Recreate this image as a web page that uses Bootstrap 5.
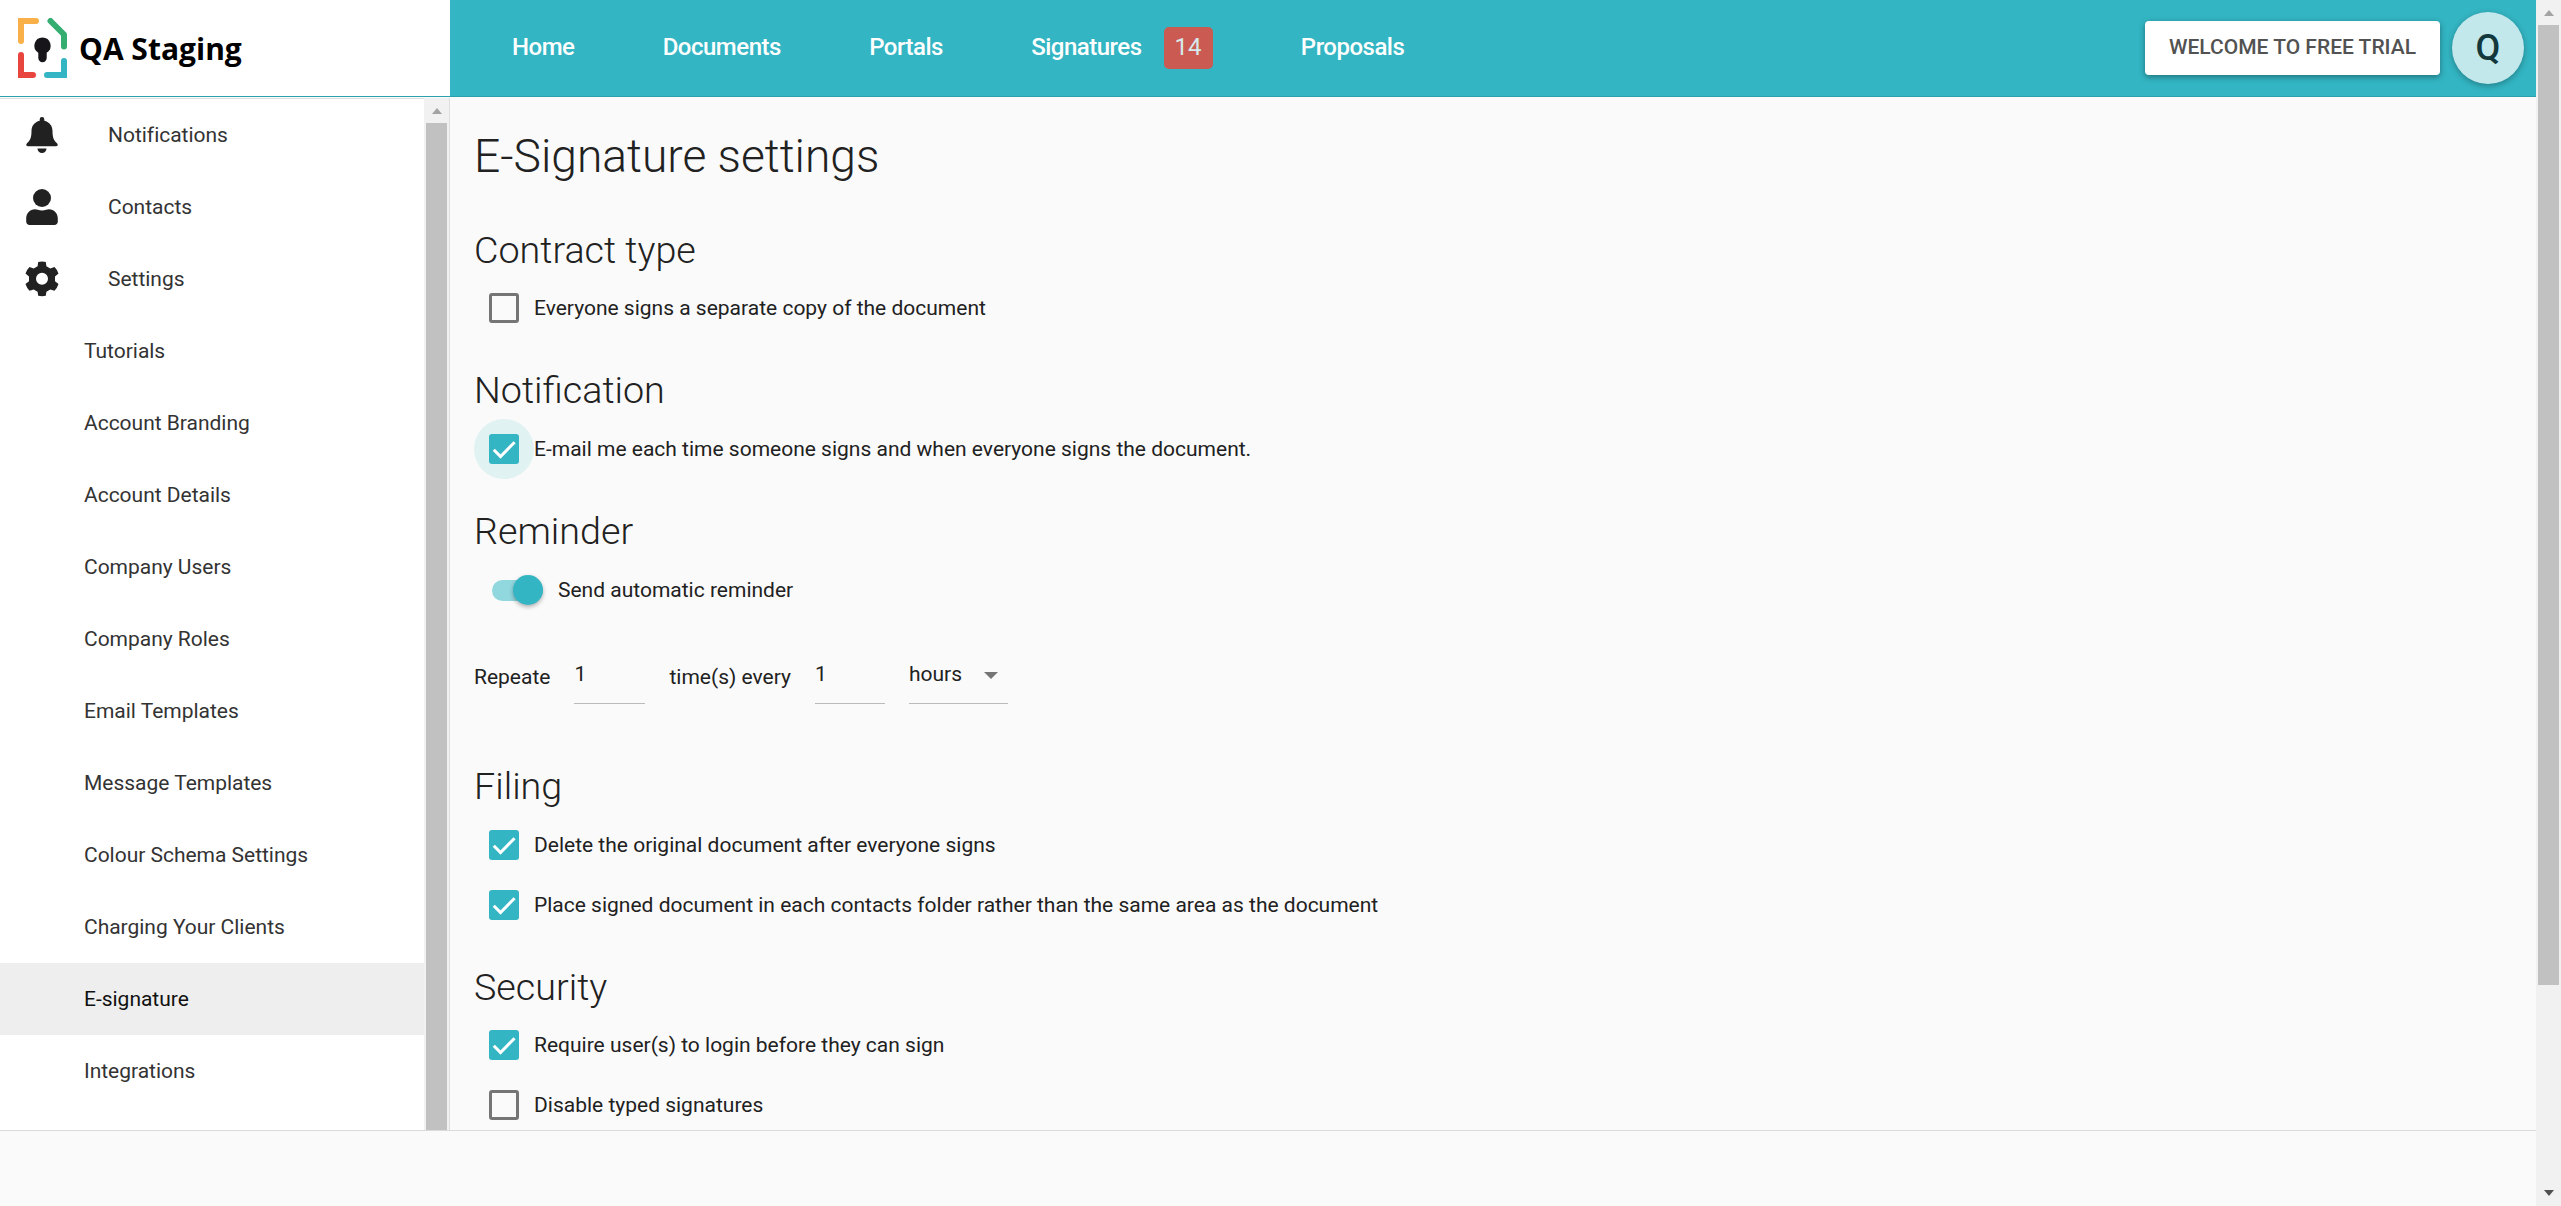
<!DOCTYPE html>
<html lang="en">
<head>
<meta charset="utf-8">
<title>E-Signature settings</title>
<link rel="stylesheet" href="https://cdn.jsdelivr.net/npm/bootstrap@5.3.0/dist/css/bootstrap.min.css">
<style>
:root{--teal:#33b5c3;--ink:#212121}
body{font-family:Roboto,"Liberation Sans",sans-serif;font-size:21px;line-height:30px;color:var(--ink);background:#fafafa;height:1206px;overflow:hidden}
.app-head{height:97px;border-bottom:1px solid #2ba0ad;background:var(--teal)}
.brand{width:450px;padding-left:18px;background:#fff;font:700 30px "Open Sans",sans-serif;color:#000}
.brand svg{width:49px;height:60px;margin-right:12px}
.brand span{padding-top:1px}
.top-nav{gap:88.3px;padding-left:62px;padding-bottom:2px}
.top-nav .nav-link{font-size:24px;font-weight:500;letter-spacing:-.5px;color:#fff}
.count{width:49px;height:42px;border-radius:5px;background:#cb5a53;color:#d6e9eb;font-size:24px;font-weight:400;letter-spacing:0;line-height:40px;margin:2px 0 0 22px}
.trial{width:295px;height:54px;border:0;border-radius:4px;background:#fff;color:#525252;font-size:21px;font-weight:500;padding:0;margin-right:12px;box-shadow:0 2px 6px rgba(0,0,0,.38)}
.avatar{width:72px;height:72px;background:#c2e8eb;color:#12383d;font-size:36px;font-weight:500;margin-right:12px;box-shadow:0 2px 6px rgba(0,0,0,.3)}
.work{height:1034px;padding-top:1px;border-bottom:1px solid #dadada}
.side{width:424px;background:#fff;border-top:1px solid #dfdfdf}
.side .nav-link{height:72px;padding:0 0 0 84px;color:#333;font-size:21px;letter-spacing:-.02px}
.side .nav-link.with-icon{padding-left:24px}
.side .nav-link svg{width:36px;height:36px;margin-right:48px;fill:var(--ink)}
.side .nav-link.active{background:#eee;color:#111}
.bar{width:25px;background:#f1f1f1;flex:none}
.bar i{width:0;border:5.5px solid transparent;margin:10px 0 9px}
.bar .up{border-top:0;border-bottom:6px solid #a3a3a3}
.bar .down{border-bottom:0;border-top:6px solid #505050;margin:auto 0 10px}
.thumb{width:21px;background:#c1c1c1}
.page-thumb{height:960px}
.side-bar{width:26px;border-right:1px solid #dfdfdf}
.settings{padding:28px 0 0 24px}
.settings h1{font-size:46.2px;font-weight:300;line-height:60px;margin:0 0 40px}
.settings h2{font-size:37.7px;font-weight:300;line-height:48px;margin:0 0 5px}
.settings h2.snug{margin-bottom:4px}
.settings section{margin-bottom:28px}
.settings .reminder{margin-bottom:58px}
.opt{height:60px;gap:15px;padding-left:15px}
.opt .form-check-input{appearance:none;width:30px;height:30px;margin:0;border:3px solid #757575;border-radius:3px;background:transparent;flex:none}
.opt .form-check-input:checked{border:0;background:var(--teal) url("data:image/svg+xml,%3Csvg xmlns='http://www.w3.org/2000/svg' viewBox='0 0 30 30'%3E%3Cpath d='M4.8 15.8l6.7 6.7L25.6 8.2' fill='none' stroke='%23fff' stroke-width='3'/%3E%3C/svg%3E") center/30px no-repeat}
.halo{width:60px;height:60px;background:#e1f2f3;margin:0 -15px;flex:none}
.opt.switch-row{padding-left:18px}
.toggle{width:51px;height:21px;border-radius:11px;background:#91d7de;flex:none}
.toggle i{width:30px;height:30px;border-radius:50%;background:var(--teal);flex:none;box-shadow:0 2px 4px rgba(0,0,0,.3)}
.repeat-row{height:54px;margin-top:30px}
.repeat-row .lbl{padding-top:12px}
.repeat-row .field{height:54px;border-bottom:1px solid #bbb;padding-top:9px}
.repeat-row .num{width:71px;margin:0 24px}
.repeat-row .num2{width:70px}
.repeat-row .unit{width:99px}
.caret{border:7px solid transparent;border-top-color:#757575;border-bottom:0;margin:0 10px 12px 0}
</style>
</head>
<body class="d-flex">
<div class="flex-grow-1 d-flex flex-column">
  <header class="app-head d-flex">
    <div class="brand d-flex align-items-center">
      <svg viewBox="0 0 49 60" fill="none" stroke-width="6" stroke-linecap="round">
        <path d="M3 23V3H18" stroke="#f9b048"/><path d="M32.500 3L46 16.500V28.500" stroke="#33ad70" stroke-linejoin="round"/>
        <path d="M3 37V57H15" stroke="#e8453f"/><path d="M46 43V57H29" stroke="#33b5c3"/>
        <path d="M24.500 19.500a8.200 8.200 0 0 1 4.200 15.200V40a4.200 4.200 0 0 1-8.400 0V34.700A8.200 8.200 0 0 1 24.500 19.500z" fill="#17151a"/>
      </svg>
      <span>QA Staging</span>
    </div>
    <nav class="top-nav d-flex align-items-center">
      <a class="nav-link">Home</a><a class="nav-link">Documents</a><a class="nav-link">Portals</a>
      <a class="nav-link d-flex align-items-center">Signatures<span class="count text-center">14</span></a>
      <a class="nav-link">Proposals</a>
    </nav>
    <div class="ms-auto d-flex align-items-center">
      <button class="btn trial">WELCOME TO FREE TRIAL</button>
      <div class="avatar rounded-circle d-flex align-items-center justify-content-center">Q</div>
    </div>
  </header>
  <div class="work d-flex overflow-hidden">
    <aside class="side nav flex-column flex-nowrap">
      <a class="nav-link with-icon d-flex align-items-center"><svg viewBox="0 0 36 36"><path d="M18 0a2.300 2.300 0 0 1 2.300 2.300v1.500C25.500 5 28.500 9 28.500 14c0 7 1.500 9.500 4.500 12.300 1.300 1.300.8 2.900-1 2.900H4c-1.800 0-2.300-1.600-1-2.900C6 23.500 7.500 21 7.500 14c0-5 3-9 8.200-10.200V2.300A2.300 2.300 0 0 1 18 0zM13.500 31.500h9a4.500 4.500 0 0 1-9 0z"/></svg>Notifications</a>
      <a class="nav-link with-icon d-flex align-items-center"><svg viewBox="0 0 36 36"><circle cx="18" cy="9" r="9"/><path d="M11 20.300c2 0 3.500 1.200 7 1.200s5-1.200 7-1.200c5 0 8.800 4 8.800 9v3.200c0 2-1.500 3.500-3.500 3.500H5.700c-2 0-3.500-1.500-3.500-3.500v-3.200c0-5 3.800-9 8.800-9z"/></svg>Contacts</a>
      <a class="nav-link with-icon d-flex align-items-center"><svg viewBox="0 0 36 36"><path fill-rule="evenodd" d="M14.200.9Q18 0 21.800.9L22.400 5.300 26.300 7.600 30.500 5.900Q33.300 8.600 34.500 12.500L31 15.400V20.200L34.500 23.100Q33.300 27 30.500 29.700L26.300 28.400 22.400 30.700 21.800 34.800Q18 35.700 14.200 34.800L13.600 30.700 9.700 28.400 5.500 29.700Q2.700 27 1.500 23.100L5 20.200V15.400L1.500 12.500Q2.700 8.600 5.500 5.900L9.700 7.600 13.600 5.300zM18 11.800a6 6 0 1 0 0 12 6 6 0 0 0 0-12z"/></svg>Settings</a>
      <a class="nav-link d-flex align-items-center">Tutorials</a>
      <a class="nav-link d-flex align-items-center">Account Branding</a>
      <a class="nav-link d-flex align-items-center">Account Details</a>
      <a class="nav-link d-flex align-items-center">Company Users</a>
      <a class="nav-link d-flex align-items-center">Company Roles</a>
      <a class="nav-link d-flex align-items-center">Email Templates</a>
      <a class="nav-link d-flex align-items-center">Message Templates</a>
      <a class="nav-link d-flex align-items-center">Colour Schema Settings</a>
      <a class="nav-link d-flex align-items-center">Charging Your Clients</a>
      <a class="nav-link active d-flex align-items-center">E-signature</a>
      <a class="nav-link d-flex align-items-center">Integrations</a>
    </aside>
    <div class="bar side-bar d-flex flex-column align-items-center">
      <i class="up"></i><div class="thumb flex-grow-1"></div>
    </div>
    <main class="settings flex-grow-1">
      <h1>E-Signature settings</h1>
      <section>
        <h2 class="snug">Contract type</h2>
        <label class="opt d-flex align-items-center"><input class="form-check-input" type="checkbox">Everyone signs a separate copy of the document</label>
      </section>
      <section>
        <h2>Notification</h2>
        <label class="opt d-flex align-items-center"><span class="halo rounded-circle d-flex align-items-center justify-content-center"><input class="form-check-input" type="checkbox" checked></span>E-mail me each time someone signs and when everyone signs the document.</label>
      </section>
      <section class="reminder">
        <h2>Reminder</h2>
        <label class="opt switch-row d-flex align-items-center"><span class="toggle d-flex align-items-center justify-content-end"><i></i></span>Send automatic reminder</label>
        <div class="repeat-row d-flex">
          <span class="lbl">Repeate</span><span class="field num">1</span><span class="lbl">time(s) every</span><span class="field num num2">1</span>
          <span class="field unit d-flex justify-content-between"><span>hours</span><i class="caret align-self-center"></i></span>
        </div>
      </section>
      <section>
        <h2>Filing</h2>
        <label class="opt d-flex align-items-center"><input class="form-check-input" type="checkbox" checked>Delete the original document after everyone signs</label>
        <label class="opt d-flex align-items-center"><input class="form-check-input" type="checkbox" checked>Place signed document in each contacts folder rather than the same area as the document</label>
      </section>
      <section>
        <h2 class="snug">Security</h2>
        <label class="opt d-flex align-items-center"><input class="form-check-input" type="checkbox" checked>Require user(s) to login before they can sign</label>
        <label class="opt d-flex align-items-center"><input class="form-check-input" type="checkbox">Disable typed signatures</label>
      </section>
    </main>
  </div>
</div>
<div class="bar d-flex flex-column align-items-center">
  <i class="up"></i><div class="thumb page-thumb"></div><i class="down"></i>
</div>
<script src="https://cdn.jsdelivr.net/npm/bootstrap@5.3.0/dist/js/bootstrap.bundle.min.js"></script>
</body>
</html>
